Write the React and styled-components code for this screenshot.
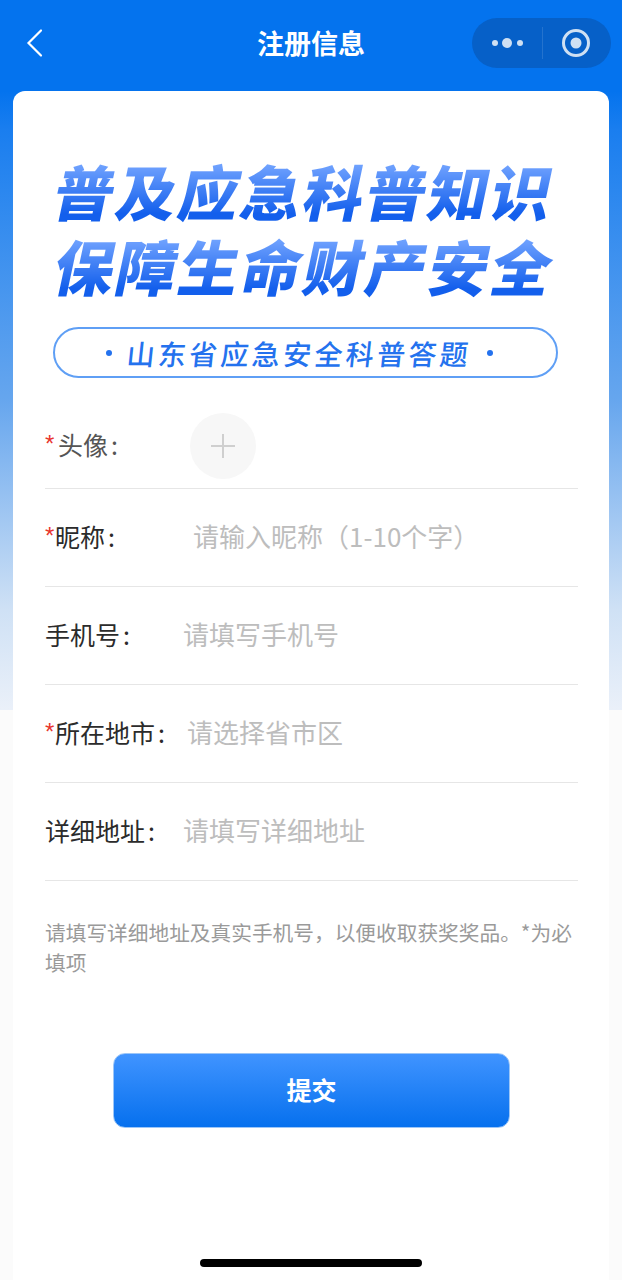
import React from "react";
import styled, { createGlobalStyle } from "styled-components";

const Global = createGlobalStyle`
  html, body { margin: 0; padding: 0; background: #fcfcfc; }
  * { box-sizing: border-box; }
  body { font-family: "Noto Sans CJK SC", "Noto Sans", sans-serif; }
`;

const Page = styled.div`
  position: relative;
  width: 622px;
  height: 1280px;
  overflow: hidden;
  background:
    linear-gradient(180deg, #0473ee 0, #0473ee 91px, #1a7eef 130px, #66a6ee 400px, #cfe1f5 610px, #eaf0f9 709px) top / 100% 710px no-repeat,
    #fbfbfb;
`;

const NavBar = styled.header`
  height: 91px;
  display: grid;
  grid-template-columns: 1fr auto 1fr;
  align-items: start;
`;

const BackButton = styled.div`
  padding: 28px 0 0 25px;
  line-height: 0;
`;

const Title = styled.h1`
  margin: 0;
  padding-top: 24px;
  font-size: 27px;
  line-height: 38px;
  font-weight: 700;
  color: #fff;
`;

const Capsule = styled.div`
  justify-self: end;
  margin: 18px 11px 0 0;
  width: 139px;
  height: 50px;
  border-radius: 25px;
  background: #0660c8;
  display: flex;
  align-items: center;
  padding: 0 20px;
  justify-content: space-between;
`;

const Divider = styled.span`
  width: 1px;
  height: 32px;
  background: rgba(255, 255, 255, 0.12);
`;

const Card = styled.main`
  width: 596px;
  height: 1189px;
  margin-left: 13px;
  padding: 0 31px 0 32px;
  background: #fff;
  border-radius: 12px 12px 0 0;
`;

const Hero = styled.section`
  padding: 61px 0 0 11px;
`;

const SloganLine = styled.div`
  width: fit-content;
  font-size: 60px;
  line-height: 75px;
  height: 75px;
  font-weight: 900;
  letter-spacing: 2.4px;
  white-space: nowrap;
  color: transparent;
  background: linear-gradient(180deg, #74a5ff 14%, #135fec 82%);
  -webkit-background-clip: text;
  background-clip: text;
  transform: skewX(-12deg);
`;

const Pill = styled.div`
  margin: 25px 0 0 -3px;
  width: 505px;
  height: 51px;
  border-radius: 26px;
  border: 2px solid #5f9ff5;
  background: #fff;
  display: flex;
  align-items: center;
  justify-content: center;
  gap: 6px;
  padding-right: 12px;
  font-size: 28px;
  font-weight: 500;
  letter-spacing: 3.3px;
  color: #2472ee;
`;

const PillText = styled.span`
  display: inline-block;
  transform: skewX(-6deg);
  white-space: nowrap;
  line-height: 40px;
`;

const PillDot = styled.span`
  width: 6px;
  height: 6px;
  margin: 0 9px;
  border-radius: 50%;
  background: #2472ee;
`;

const Form = styled.section``;

const Row = styled.div`
  height: ${(p) => p.$h || 98}px;
  padding-top: ${(p) => p.$top || 0}px;
  display: flex;
  align-items: center;
  border-bottom: 1px solid #e6e6e6;
`;

const Label = styled.label`
  width: ${(p) => p.$w}px;
  flex: none;
  display: flex;
  align-items: center;
  padding-bottom: 4px;
  color: ${(p) => p.$color || "#2b2b2b"};
  white-space: nowrap;
  font-size: 25px;
  line-height: 34px;
`;

const Star = styled.span`
  color: #e8352e;
  margin-right: ${(p) => p.$gap || 0}px;
  font-family: "Liberation Sans", sans-serif;
  font-size: 24px;
  width: 10px;
`;

const Colon = styled.span`
  margin-left: 3px;
`;

const Placeholder = styled.span`
  color: #bdbdbd;
  white-space: nowrap;
  font-size: 26px;
  line-height: 34px;
  padding-bottom: 3px;
`;

const Avatar = styled.div`
  width: 66px;
  height: 66px;
  border-radius: 50%;
  background: #f7f7f7;
  display: flex;
  align-items: center;
  justify-content: center;
`;

const Note = styled.p`
  margin: 36px 0 0;
  width: 533px;
  font-size: 20.7px;
  line-height: 30px;
  color: #9a9a9a;
`;

const Submit = styled.button`
  display: flex;
  align-items: center;
  justify-content: center;
  width: 397px;
  height: 75px;
  margin: 76px 0 0 68px;
  padding: 0 0 3px;
  border: 1px solid #9cc6f8;
  border-radius: 12px;
  background: linear-gradient(180deg, #4094ff 0%, #0670ee 100%);
  color: #fff;
  font-family: inherit;
  font-size: 25px;
  font-weight: 700;
`;

const HomeBar = styled.div`
  position: absolute;
  left: 200px;
  top: 1259px;
  width: 222px;
  height: 8px;
  border-radius: 4px;
  background: #000;
`;

const Back = () => (
  <svg width="22" height="30" viewBox="0 0 22 30" fill="none">
    <path d="M16 2.5 L3.5 15 L16 27.5" stroke="#fff" strokeWidth="2.2" strokeLinecap="round" strokeLinejoin="miter" />
  </svg>
);

const Dots = () => (
  <svg width="32" height="12" viewBox="0 0 32 12" fill="#cfe0f3">
    <circle cx="3" cy="6" r="3" />
    <circle cx="15" cy="6" r="5" />
    <circle cx="28" cy="6" r="3" />
  </svg>
);

const Target = () => (
  <svg width="30" height="30" viewBox="0 0 30 30" fill="none">
    <circle cx="15" cy="15" r="12.5" stroke="#cfe0f3" strokeWidth="3" />
    <circle cx="15" cy="15" r="5.5" fill="#cfe0f3" />
  </svg>
);

const Plus = () => (
  <svg width="24" height="24" viewBox="0 0 24 24" stroke="#cfcfcf" strokeWidth="2">
    <path d="M0 12 H24 M12 0 V24" />
  </svg>
);

const fields = [
  { label: "昵称", required: true, width: 148, hint: "请输入昵称\uFF081-10个字\uFF09" },
  { label: "手机号", width: 138, hint: "请填写手机号" },
  { label: "所在地市", required: true, width: 142, hint: "请选择省市区" },
  { label: "详细地址", width: 138, hint: "请填写详细地址" },
];

const noteText = "请填写详细地址及真实手机号\uFF0C以便收取获奖奖品。*为必填项";

export default function App() {
  return (
    <Page>
      <Global />
      <NavBar>
        <BackButton><Back /></BackButton>
        <Title>注册信息</Title>
        <Capsule>
          <Dots />
          <Divider />
          <Target />
        </Capsule>
      </NavBar>
      <Card>
        <Hero>
          <SloganLine>普及应急科普知识</SloganLine>
          <SloganLine>保障生命财产安全</SloganLine>
          <Pill>
            <PillDot />
            <PillText>山东省应急安全科普答题</PillText>
            <PillDot />
          </Pill>
        </Hero>
        <Form>
          <Row $h={111} $top={25}>
            <Label $w={145} $color="#555">
              <Star $gap={3}>*</Star>头像<Colon>:</Colon>
            </Label>
            <Avatar><Plus /></Avatar>
          </Row>
          {fields.map((f) => (
            <Row key={f.label}>
              <Label $w={f.width}>
                {f.required && <Star>*</Star>}
                {f.label}<Colon>:</Colon>
              </Label>
              <Placeholder>{f.hint}</Placeholder>
            </Row>
          ))}
        </Form>
        <Note>{noteText}</Note>
        <Submit type="button">提交</Submit>
      </Card>
      <HomeBar />
    </Page>
  );
}
